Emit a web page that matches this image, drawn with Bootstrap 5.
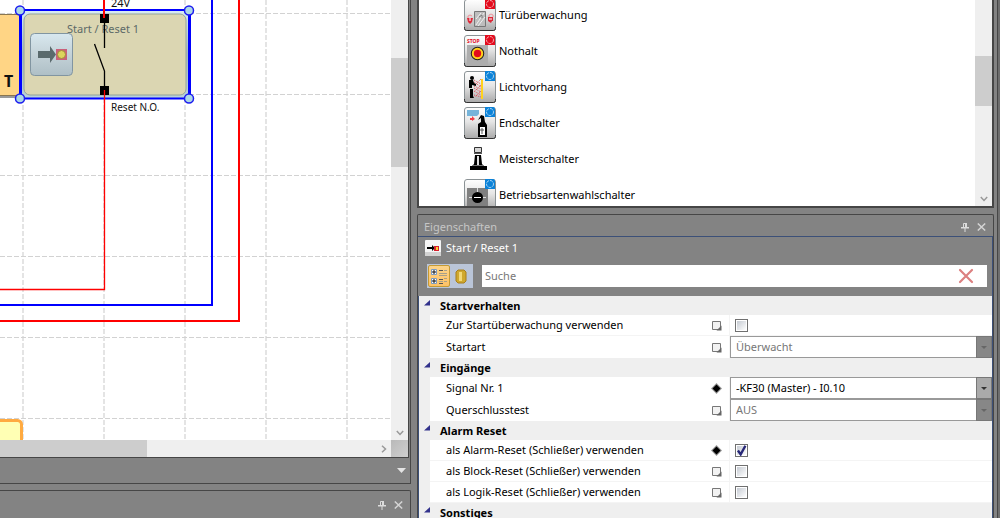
<!DOCTYPE html>
<html lang="de">
<head>
<meta charset="utf-8">
<meta name="viewport" content="width=device-width, initial-scale=1">
<title>Eigenschaften – Start / Reset 1</title>
<link href="https://cdn.jsdelivr.net/npm/bootstrap@5.3.0/dist/css/bootstrap.min.css" rel="stylesheet">
<style>
:root { --edge: #464646; --chrome: #838383; --accent: #3c5078; --soft: #efefef; }
body { background: var(--chrome); font: 11px/16px "Noto Sans", "Open Sans", sans-serif; color: #000; }
svg { display: block; flex: none; }
.left-dock { flex: 411 1 0; margin-right: 6px; }
.right-dock { flex: 577 1 0; }
.app-edge { flex: none; width: 3px; border-left: 1px solid var(--edge); background: #6e6e6e; margin-left: 3px; }
.editor { border: solid var(--edge); border-width: 0 1px 1px 0; }
.editor-inner { border: solid var(--edge); border-width: 0 1px 1px 0; margin-right: 1px; }
.sheet { background: #fff; }
.sheet text { fill: #111; font-size: 11px; }
.bar-v { width: 17px; background: var(--soft); }
.bar-h { height: 17px; background: var(--soft); }
.thumb { background: #cdcdcd; }
.corner { width: 17px; background: linear-gradient(135deg, #b9b9b9, #cfcfcf); }
.tab-strip { height: 25px; }
.lower { height: 28px; margin-top: 6px; padding-right: 7px; gap: 8px; border: solid var(--edge); border-width: 1px 1px 0 0; border-top-right-radius: 2px; }
.tool { border: 0; background: none; padding: 0; }
.tree-pane { flex: 0 0 40.1%; border: 2px solid var(--edge); border-top: 0; background: #fff; }
.tree-list { margin: -3px 0 0 45px; }
.tree-list li { height: 36px; gap: 3px; }
.tree-list text { fill: #e30b1d; font-size: 5px; font-weight: 700; }
.props { margin-top: 6px; border: 1px solid var(--edge); border-bottom: 0; border-radius: 2px 2px 0 0; }
.props-head { height: 22px; padding: 2px 7px 0 6px; color: #c6c6c6; }
.props-body { border: solid var(--accent); border-width: 1px 1px 0 0; }
.props-title { height: 22px; padding-left: 7px; gap: 5px; color: #fff; }
.props-tools { padding: 5px 5px 8px 9px; gap: 9px; }
.modes { background: #bac5d8; height: 24px; padding: 1px; }
.modes button { width: 22px; height: 22px; padding: 0; border: 1px solid transparent; border-radius: 2px; background: none; }
.modes .on { border-color: #c49a35; background: linear-gradient(#fcd48a, #ffc266); }
.find { height: 22px; background: #fff; padding-right: 13px; }
.find input { border: 0; outline: 0; background: none; padding: 0 3px; color: #000; }
.find input::placeholder { color: #777; }
.grid-area { background: var(--soft); border-left: 1px solid var(--accent); }
.group-row { height: 19px; padding-left: 5px; gap: 10px; font-weight: 700; margin: 0; font-size: 11px; line-height: 19px; }
.prop { display: grid; grid-template-columns: 300fr 262fr; margin-left: 11px; height: 21px; background: #fff; border-bottom: 1px solid #f4f4f4; }
.prop.pick { height: 22px; border: 0; }
.prop label { padding-left: 16px; }
.cell-name { padding-right: 7px; border-right: 1px solid #f4f4f4; }
.prop input[type=checkbox] { appearance: none; width: 13px; height: 13px; margin: 0 0 0 5px; border: 1px solid #707070; background: linear-gradient(135deg, #c5cad2, #fff) content-box; padding: 1px; }
.prop input[type=checkbox]:checked { background: url("data:image/svg+xml,%3Csvg xmlns='http://www.w3.org/2000/svg' viewBox='0 0 11 11'%3E%3Cpath d='M2.5 5.5 4.8 8.8 8.8 1.5' fill='none' stroke='%23282878' stroke-width='2'/%3E%3C/svg%3E") border-box, linear-gradient(135deg, #c5cad2, #fff) content-box; }
.prop select { appearance: none; border: 1px solid #999; border-right: 0; border-radius: 0; background: #fff; padding: 0 5px; color: #000; min-width: 0; opacity: 1; }
.prop select:disabled { color: #777; }
.drop { width: 16px; border: 1px solid #777; background: #aaa; }
select:disabled + .drop { background: #878787; }
</style>
</head>
<body class="vh-100 overflow-hidden">
<svg width="0" height="0" class="position-absolute" aria-hidden="true">
  <defs>
    <linearGradient id="tile" x2="0" y2="1"><stop offset="0" stop-color="#fff"/><stop offset=".45" stop-color="#e6e6e6"/><stop offset="1" stop-color="#a9a9a9"/></linearGradient>
    <linearGradient id="glass" x2="0" y2="1"><stop offset="0" stop-color="#d8e8ef"/><stop offset=".5" stop-color="#c4d2d8"/><stop offset="1" stop-color="#aebfc6"/></linearGradient>
    <linearGradient id="halo" x2="0" y2="1"><stop offset="0" stop-color="#d9edf4"/><stop offset=".5" stop-color="#a4bcc0"/><stop offset="1" stop-color="#b8d2da"/></linearGradient>
    <symbol id="plate" viewBox="0 0 32 32"><rect x=".5" y=".5" width="31" height="31" rx="2.5" fill="url(#tile)" stroke="#8b9295"/><path d="M.5 28v1.500q0 2 2 2h27q2 0 2-2V28" fill="none" stroke="#333"/></symbol>
    <symbol id="ring" viewBox="0 0 10 10"><path d="M0 0h8q2 0 2 2v8H0z"/><circle cx="5" cy="5" r="3.500" fill="none" stroke="#fff" stroke-opacity=".65" stroke-dasharray="3 1"/></symbol>
    <symbol id="pin" viewBox="0 0 8 10"><path d="M2.500 6V1.500h3V6" fill="none" stroke="#dcdcdc"/><path d="M4 1h2v5H4zM0 5h8v1.500H0zM3.500 6h1v4h-1z" fill="#dcdcdc"/></symbol>
    <symbol id="shut" viewBox="0 0 9 8"><path d="M.8.500l7.400 7M8.200.500l-7.400 7" fill="none" stroke="#d4d4d4" stroke-width="1.500"/></symbol>
    <symbol id="down" viewBox="0 0 8 6"><path d="M.8 1l3.200 3.500L7.200 1" fill="none" stroke="#999" stroke-width="1.500"/></symbol>
    <symbol id="fold" viewBox="0 0 6 6"><path d="M6 0v5.500H0z" fill="#32328c"/></symbol>
    <symbol id="unset" viewBox="0 0 11 11"><path d="M1.500 1.500h8v8h-8z" fill="#f2f2f2" stroke="#777"/><path d="M10.500 5.500v5h-5z" fill="#666"/></symbol>
    <symbol id="given" viewBox="0 0 11 11"><path d="M5.500 0 11 5.500 5.500 11 0 5.500z" fill="#999"/><path d="M5.500 1.500l4 4-4 4-4-4z" fill="#000"/></symbol>
    <symbol id="caret" viewBox="0 0 6 3"><path d="M0 0h6L3 3z"/></symbol>
  </defs>
</svg>

<div class="d-flex h-100">
  <section class="left-dock d-flex flex-column overflow-hidden">
    <div class="editor flex-fill d-flex flex-column overflow-hidden">
      <div class="editor-inner flex-fill d-flex flex-column overflow-hidden">
        <div class="d-flex flex-fill overflow-hidden">
          <div class="sheet flex-fill overflow-hidden">
            <svg class="w-100 h-100" role="img" aria-label="Schaltplan">
              <g fill="none" stroke="#e4e4e4" stroke-width="2" stroke-dasharray="5 2"><path d="M23 0v900M104 0v900M185 0v900M266 0v900M347 0v900"/></g>
              <g fill="none" stroke="#d2d2d2" stroke-dasharray="5 2"><path d="M0 13.500h1600M0 94.500h1600M0 175.500h1600M0 256.500h1600M0 337.500h1600M0 418.500h1600"/></g>
              <rect x="-10" y="95" width="30" height="3" fill="#999"/>
              <rect x="-10" y="14.500" width="34" height="81" fill="#ffd585" stroke="#8a7650"/>
              <text x="4" y="87" font-weight="700" style="font-size:16px">T</text>
              <rect x="20" y="10" width="169" height="88" fill="url(#halo)"/>
              <rect x="24" y="14" width="162" height="81" rx="6" fill="#dbd6b2" stroke="#93a29a"/>
              <path d="M20 10h169M20 98.500h169" stroke="#00f" stroke-width="2"/>
              <path d="M20.500 10v89M189.500 10v89" stroke="#00f" stroke-width="3"/>
              <rect x="30.500" y="33.500" width="42" height="42" rx="4" fill="url(#glass)" stroke="#8195a1"/>
              <path d="M38 51h12v-5l6 8.500-6 8.500v-5H38z" fill="#5a6a6d"/>
              <rect x="56" y="49" width="11" height="11" fill="#c9607a"/>
              <circle cx="61.500" cy="54.500" r="4" fill="#dcd45c" stroke="#a18a3c"/>
              <text x="67" y="33" style="fill:#5d6a68">Start / Reset 1</text>
              <g fill="#add8e6" stroke="#1c1cf0" stroke-width="1.500"><circle cx="20" cy="10.500" r="4.500"/><circle cx="189" cy="10.500" r="4.500"/><circle cx="20" cy="98.500" r="4.500"/><circle cx="189" cy="98.500" r="4.500"/></g>
              <path d="M100 14h9v9h-9zM100 86h9v9h-9z"/>
              <path d="M104.500 20v28M94.500 44l10 27v19" fill="none" stroke="#000" stroke-width="1.300"/>
              <path d="M104 0v18" stroke="red" stroke-width="2"/>
              <path d="M104.500 90v199.500H0" fill="none" stroke="red" stroke-width="1.300"/>
              <path d="M212 0v305H0" fill="none" stroke="#00f" stroke-width="2"/>
              <path d="M239 0v321H0" fill="none" stroke="red" stroke-width="2"/>
              <text x="111" y="7">24V</text>
              <text x="111" y="111" style="font-size:10px">Reset N.O.</text>
              <rect x="-10" y="420.500" width="31.500" height="60" rx="4" fill="#ffffb4" stroke="#ffaa40" stroke-width="3"/>
            </svg>
          </div>
          <div class="bar-v d-flex flex-column align-items-center">
            <div style="height:13.200%"></div><div class="thumb w-100" style="height:24.800%"></div>
            <svg class="mt-auto mb-1" width="8" height="6"><use href="#down"/></svg>
          </div>
        </div>
        <div class="d-flex">
          <div class="bar-h flex-fill d-flex align-items-center"><div class="thumb h-100" style="width:37.600%"></div><svg class="ms-auto me-1" width="6" height="8"><path d="M1 .8l3.500 3.200L1 7.200" fill="none" stroke="#999" stroke-width="1.500"/></svg></div>
          <div class="corner"></div>
        </div>
      </div>
      <div class="tab-strip d-flex align-items-center justify-content-end pe-1"><button class="tool" aria-label="Weitere Dokumente"><svg width="9" height="5"><path d="M0 0h9L4.500 5z" fill="#e4e4e4"/></svg></button></div>
    </div>
    <div class="lower d-flex align-items-center justify-content-end">
      <button class="tool" aria-label="Anheften"><svg width="8" height="10"><use href="#pin"/></svg></button>
      <button class="tool" aria-label="Schließen"><svg width="9" height="8"><use href="#shut"/></svg></button>
    </div>
  </section>

  <section class="right-dock d-flex flex-column overflow-hidden">
    <div class="tree-pane d-flex overflow-hidden">
      <ul class="tree-list list-unstyled flex-fill">
        <li class="d-flex align-items-center"><svg width="32" height="32"><use href="#plate"/><path d="M10.500 12.500h11v15h-11z" fill="#bdbdbd" stroke="#777"/><path d="M12 26l8-12M12 20l5-6M14 27l7-9" stroke="#efefef"/><path d="M15 18l3-2v3" stroke="#777" fill="none"/><path d="M3 19h6l-1 4-2 2-2-2zM24 18h5v4h-1l-1 2-3-2z" fill="#dc2838"/><path d="M4 19v-2l2-1 2 1M25 18v-2l2-1 2 1v2" fill="none" stroke="#ee9299"/><path d="M6 19v3M25 20h3" stroke="#fff"/><use href="#ring" x="21" width="10" height="10" fill="#e30b1d"/></svg>Türüberwachung</li>
        <li class="d-flex align-items-center"><svg width="32" height="32"><use href="#plate"/><path d="M3 10h21v21H3z" fill="#adadad"/><text x="3" y="8">STOP</text><circle cx="13.500" cy="18.500" r="6" fill="#e30b1d" stroke="#222" stroke-width="1.500"/><circle cx="13.500" cy="18.500" r="4.700" fill="#e30b1d" stroke="#ffd21c" stroke-width="2"/><use href="#ring" x="21" width="10" height="10" fill="#e30b1d"/></svg>Nothalt</li>
        <li class="d-flex align-items-center"><svg width="32" height="32"><use href="#plate"/><path d="M10 9l7 4M10 11l7 5M10 15l7 3M10 17l7 4M10 20l7 4M10 24l7 2M17 8l-7 7M17 14l-7 7M17 20l-6 6" stroke="#e04a55" stroke-dasharray="1 1"/><path d="M17 8h2v20h-2z" fill="#ffd21c"/><circle cx="8" cy="7" r="2"/><path d="M5 9h4l1 3 2 1v2l-4-1v3H5zM6 18h3v7l1 2H6z"/><use href="#ring" x="21" width="10" height="10" fill="#0b82d8"/></svg>Lichtvorhang</li>
        <li class="d-flex align-items-center"><svg width="32" height="32"><use href="#plate"/><path d="M3 3h12v4l-2 2H3z" fill="#76b4da"/><path d="M6 11h2V9l3 3-3 2v-1H6z" fill="#ef3e46"/><path d="M14 30V17l3-2v-4l-3 2 3-5 3 1 1 6 2 3v12z"/><path d="M16 20h5v8h-5z" fill="#fff"/><path d="M17 22h2v2h-2zM18 25v2" stroke="#555" fill="none"/><use href="#ring" x="21" width="10" height="10" fill="#0b82d8"/></svg>Endschalter</li>
        <li class="d-flex align-items-center"><svg width="32" height="32"><path d="M10.500 4.500h7v5h-7z" fill="#d7d7d7" stroke="#333"/><path d="M10 10.500h8" stroke="#555"/><path d="M11 12h6l1 9 3 3v2H7v-2l3-3z"/><path d="M14 13v9" stroke="#ddd" stroke-width="2"/><path d="M6 23h17v4H6z"/><path d="M9 22.500h10" stroke="#777"/></svg>Meisterschalter</li>
        <li class="d-flex align-items-center"><svg width="32" height="32"><use href="#plate"/><path d="M3 9h21v22H3z" fill="#808080"/><path d="M13.500 9v5M5 18.500h17" stroke="#ddd"/><circle cx="13.500" cy="18.500" r="5.500"/><path d="M10 18.500h7" stroke="#fff"/><use href="#ring" x="21" width="10" height="10" fill="#0b82d8"/></svg>Betriebsartenwahlschalter</li>
      </ul>
      <div class="bar-v d-flex flex-column align-items-center">
        <div style="height:27.200%"></div><div class="thumb w-100" style="height:24.300%"></div>
        <svg class="mt-auto mb-1" width="8" height="6"><use href="#down"/></svg>
      </div>
    </div>

    <div class="props flex-fill d-flex flex-column overflow-hidden">
      <div class="props-head d-flex align-items-center">
        <span class="me-auto">Eigenschaften</span>
        <button class="tool me-2" aria-label="Anheften"><svg width="8" height="10"><use href="#pin"/></svg></button>
        <button class="tool" aria-label="Schließen"><svg width="9" height="8"><use href="#shut"/></svg></button>
      </div>
      <div class="props-body flex-fill d-flex flex-column overflow-hidden">
        <div class="props-title d-flex align-items-center">
          <svg width="16" height="16" viewBox="0 0 16 16"><rect width="16" height="16" rx="1" fill="#f4f4f4"/><path d="M0 12h16v4H0z" fill="#d2d2d2"/><path d="M2 7h5V5l3 3-3 3V9H2z"/><rect x="9" y="6" width="5" height="5" fill="#d6202c"/><rect x="11" y="7" width="2" height="3" fill="#fc3"/></svg>
          Start / Reset 1
        </div>
        <div class="props-tools d-flex align-items-center">
          <div class="modes d-flex">
            <button class="on" aria-label="Nach Kategorie" aria-pressed="true"><svg width="20" height="20"><path d="M2.500 3.500h5v5h-5zM2.500 12.500h5v5h-5z" fill="#fff" stroke="#7b9ac0"/><path d="M3 6h4M5 4v4M3 15h4M5 13v4" stroke="#111"/><path d="M10 4.500h4M10 13.500h4M10 17.500h4" stroke="#555"/><path d="M10 7.500h8M10 9.500h8M15 4.500h3M15 12.500h3M15 15.500h3M10 15.500h4" stroke="#a8a08a"/></svg></button>
            <button aria-label="Alphabetisch"><svg width="20" height="20"><path d="M7 4h6l2 2v9l-2 2H7l-2-2V6z" fill="#cfa82e" stroke="#a87f1c"/><path d="M8 6h3v9H8z" fill="#f2d878"/></svg></button>
          </div>
          <div class="find flex-fill d-flex align-items-center"><input class="flex-fill" type="text" placeholder="Suche" aria-label="Suche"><button class="tool" aria-label="Suche löschen"><svg width="16" height="16"><path d="M2 2l12 12M14 2L2 14" stroke="#dc8080" stroke-width="2.200" stroke-linecap="round"/></svg></button></div>
        </div>
        <div class="grid-area flex-fill overflow-hidden">
          <h2 class="group-row d-flex"><svg class="mt-1" width="6" height="6"><use href="#fold"/></svg>Startverhalten</h2>
          <div class="prop"><div class="cell-name d-flex align-items-center"><label class="me-auto" for="p1">Zur Startüberwachung verwenden</label><svg width="11" height="11"><use href="#unset"/></svg></div><div class="d-flex align-items-center"><input type="checkbox" id="p1"></div></div>
          <div class="prop pick"><div class="cell-name d-flex align-items-center"><label class="me-auto" for="p2">Startart</label><svg width="11" height="11"><use href="#unset"/></svg></div><div class="d-flex"><select id="p2" class="flex-fill" disabled><option>Überwacht</option></select><span class="drop d-flex align-items-center justify-content-center"><svg width="6" height="3" fill="#666"><use href="#caret"/></svg></span></div></div>
          <h2 class="group-row d-flex"><svg class="mt-1" width="6" height="6"><use href="#fold"/></svg>Eingänge</h2>
          <div class="prop pick"><div class="cell-name d-flex align-items-center"><label class="me-auto" for="p3">Signal Nr. 1</label><svg width="11" height="11"><use href="#given"/></svg></div><div class="d-flex"><select id="p3" class="flex-fill"><option>-KF30 (Master) - I0.10</option></select><span class="drop d-flex align-items-center justify-content-center"><svg width="6" height="3" fill="#333"><use href="#caret"/></svg></span></div></div>
          <div class="prop pick"><div class="cell-name d-flex align-items-center"><label class="me-auto" for="p4">Querschlusstest</label><svg width="11" height="11"><use href="#unset"/></svg></div><div class="d-flex"><select id="p4" class="flex-fill" disabled><option>AUS</option></select><span class="drop d-flex align-items-center justify-content-center"><svg width="6" height="3" fill="#666"><use href="#caret"/></svg></span></div></div>
          <h2 class="group-row d-flex"><svg class="mt-1" width="6" height="6"><use href="#fold"/></svg>Alarm Reset</h2>
          <div class="prop"><div class="cell-name d-flex align-items-center"><label class="me-auto" for="p5">als Alarm-Reset (Schließer) verwenden</label><svg width="11" height="11"><use href="#given"/></svg></div><div class="d-flex align-items-center"><input type="checkbox" id="p5" checked></div></div>
          <div class="prop"><div class="cell-name d-flex align-items-center"><label class="me-auto" for="p6">als Block-Reset (Schließer) verwenden</label><svg width="11" height="11"><use href="#unset"/></svg></div><div class="d-flex align-items-center"><input type="checkbox" id="p6"></div></div>
          <div class="prop"><div class="cell-name d-flex align-items-center"><label class="me-auto" for="p7">als Logik-Reset (Schließer) verwenden</label><svg width="11" height="11"><use href="#unset"/></svg></div><div class="d-flex align-items-center"><input type="checkbox" id="p7"></div></div>
          <h2 class="group-row d-flex"><svg class="mt-1" width="6" height="6"><use href="#fold"/></svg>Sonstiges</h2>
        </div>
      </div>
    </div>
  </section>
  <div class="app-edge"></div>
</div>
<script src="https://cdn.jsdelivr.net/npm/bootstrap@5.3.0/dist/js/bootstrap.bundle.min.js"></script>
</body>
</html>
